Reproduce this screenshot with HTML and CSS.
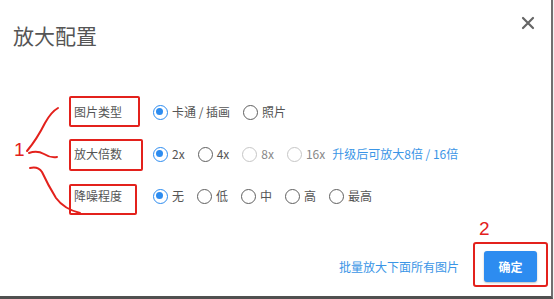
FILE: index.html
```html
<!DOCTYPE html>
<html lang="zh">
<head>
<meta charset="utf-8">
<title>放大配置</title>
<link rel="stylesheet" href="styles.css">
</head>
<body>
<div class="dialog">
  <div class="header">
    <h1 class="title">放大配置</h1>
    <span class="close"><svg width="14" height="14" viewBox="0 0 14 14"><path d="M2 2 L12 12 M12 2 L2 12" stroke="#666" stroke-width="2.2" stroke-linecap="round"/></svg></span>
  </div>
  <div class="form">
    <div class="row">
      <div class="label">图片类型</div>
      <div class="options">
        <span class="opt"><span class="radio checked"></span><span class="txt">卡通 / 插画</span></span>
        <span class="opt"><span class="radio"></span><span class="txt">照片</span></span>
      </div>
    </div>
    <div class="row">
      <div class="label">放大倍数</div>
      <div class="options">
        <span class="opt"><span class="radio checked"></span><span class="txt">2x</span></span>
        <span class="opt"><span class="radio"></span><span class="txt">4x</span></span>
        <span class="opt disabled"><span class="radio"></span><span class="txt">8x</span></span>
        <span class="opt disabled last"><span class="radio"></span><span class="txt">16x</span></span>
        <a class="upgrade">升级后可放大8倍 / 16倍</a>
      </div>
    </div>
    <div class="row">
      <div class="label">降噪程度</div>
      <div class="options">
        <span class="opt"><span class="radio checked"></span><span class="txt">无</span></span>
        <span class="opt"><span class="radio"></span><span class="txt">低</span></span>
        <span class="opt"><span class="radio"></span><span class="txt">中</span></span>
        <span class="opt"><span class="radio"></span><span class="txt">高</span></span>
        <span class="opt"><span class="radio"></span><span class="txt">最高</span></span>
      </div>
    </div>
  </div>
  <div class="footer">
    <a class="batch">批量放大下面所有图片</a>
    <button class="ok">确定</button>
  </div>
</div>

<svg class="annot" width="554" height="299" viewBox="0 0 554 299">
  <g fill="none" stroke="#e3211c" stroke-width="2" stroke-linecap="round" stroke-linejoin="round">
    <rect x="70" y="97" width="69" height="29" rx="1"/>
    <rect x="70" y="140" width="72" height="30" rx="1"/>
    <rect x="70" y="185" width="66" height="29" rx="1"/>
    <rect x="474" y="243" width="73" height="43" rx="2"/>
    <path d="M58 108 Q51 112 45 123 Q37 139 27 151"/>
    <path d="M29 153 Q37 150 44 154 Q50 158 57 157"/>
    <path d="M30 168 Q38 166 42 172 Q48 185 56 198 Q64 209 80 213"/>
  </g>
</svg>
<span class="num n1">1</span>
<span class="num n2">2</span>
</body>
</html>
```

FILE: styles.css
```css
html, body {
  margin: 0;
  padding: 0;
}
body {
  width: 554px;
  height: 299px;
  overflow: hidden;
  position: relative;
  background: #f2f2f2;
  font-family: "Noto Sans CJK SC", "Microsoft YaHei", sans-serif;
  color: #555;
}
.dialog {
  box-sizing: border-box;
  width: 553px;
  height: 299px;
  background: #fff;
  border-right: 2px solid #707070;
  border-bottom: 3px solid #505050;
}
.header {
  display: flex;
  justify-content: space-between;
  align-items: flex-start;
  padding: 20px 16px 0 13px;
}
.title {
  margin: 0;
  font-size: 21px;
  font-weight: normal;
  line-height: 30px;
  color: #555;
}
.close {
  display: block;
  width: 14px;
  height: 14px;
  margin-top: -4px;
}
.close svg {
  display: block;
}
.form {
  margin-top: 41px;
  padding-left: 74px;
}
.row {
  display: flex;
  align-items: center;
  height: 42px;
  font-size: 12px;
  line-height: 16px;
}
.label {
  width: 79px;
  color: #555;
}
.options {
  display: flex;
  align-items: center;
}
.opt {
  display: flex;
  align-items: center;
  margin-right: 13px;
}
.opt.last {
  margin-right: 7px;
}
.radio {
  box-sizing: border-box;
  position: relative;
  width: 15px;
  height: 15px;
  border: 1.5px solid #5f5f5f;
  border-radius: 50%;
  margin-right: 4px;
  background: #fff;
}
.radio.checked {
  border: 1.6px solid #2d8cf0;
}
.radio.checked::after {
  content: "";
  position: absolute;
  left: 2.4px;
  top: 2.4px;
  width: 7px;
  height: 7px;
  border-radius: 50%;
  background: #2d8cf0;
}
.txt {
  color: #555;
}
.opt.disabled .radio {
  border-color: #c6c6c6;
}
.opt.disabled .txt {
  color: #888;
}
.upgrade {
  color: #3a95e6;
}
.footer {
  display: flex;
  justify-content: flex-end;
  align-items: center;
  margin-top: 34px;
  padding-right: 14px;
}
.batch {
  font-size: 12px;
  line-height: 16px;
  color: #3a95e6;
  margin-right: 25px;
}
.ok {
  width: 53px;
  height: 31px;
  padding: 0;
  border: none;
  border-radius: 3px;
  background: #2d8cf0;
  color: #fff;
  font-family: "Noto Sans CJK SC", sans-serif;
  font-size: 12px;
  font-weight: bold;
  box-shadow: 0 1px 2px rgba(0, 0, 0, 0.25);
}
.annot {
  position: absolute;
  left: 0;
  top: 0;
  pointer-events: none;
}
.num {
  position: absolute;
  font-family: "Liberation Sans", sans-serif;
  font-size: 19px;
  line-height: 1;
  color: #e3211c;
}
.n1 {
  left: 14px;
  top: 140px;
}
.n2 {
  left: 479px;
  top: 219px;
}
```
